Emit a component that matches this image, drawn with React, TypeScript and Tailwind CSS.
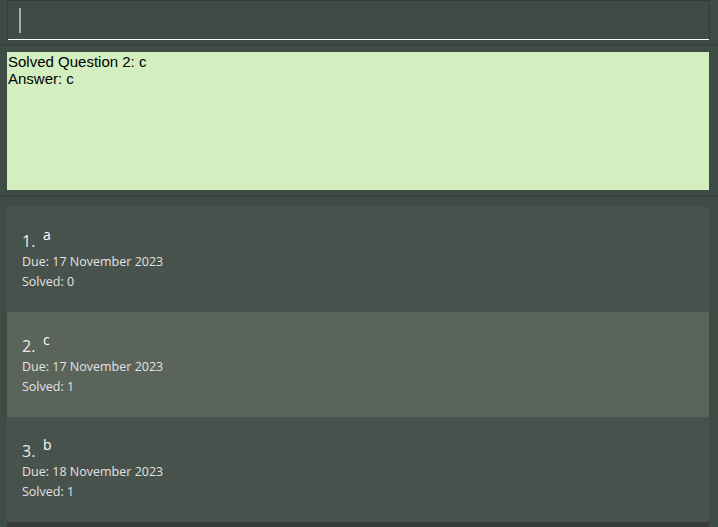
import React from 'react'

type Question = {
  index: number
  title: string
  due: string
  solved: number
  selected?: boolean
}

const questions: Question[] = [
  { index: 1, title: 'a', due: '17 November 2023', solved: 0 },
  { index: 2, title: 'c', due: '17 November 2023', solved: 1, selected: true },
  { index: 3, title: 'b', due: '18 November 2023', solved: 1 },
]

const QuestionCard = ({ q }: { q: Question }) => {
  return (
    <div
      className={
        'h-[105px] pl-[15px] pt-[19px] ' +
        (q.selected ? 'bg-[#5a645b]' : 'bg-[#48524c]')
      }
    >
      <div className="flex items-start h-[26px]">
        <span className="text-[16px] leading-[22px] text-[#ececec] pt-[4px] w-[21px]">{q.index}.</span>
        <span className="text-[14px] leading-[18px] text-white">{q.title}</span>
      </div>
      <p className="text-[12.5px] leading-[20px] text-[#e2e2e2]">Due: {q.due}</p>
      <p className="text-[12.5px] leading-[20px] text-[#e2e2e2]">Solved: {q.solved}</p>
    </div>
  )
}

export default function App() {
  return (
    <div
      className="w-[718px] h-[527px] bg-[#3f4c45] overflow-hidden flex flex-col"
      style={{ fontFamily: '"Open Sans", "Noto Sans", sans-serif' }}
    >
      {/* command box */}
      <div className="h-[44px] pl-[7px] pr-[8px]">
        <div className="h-[40px] border border-[#353b37] border-b-0 relative">
          <div className="absolute left-[11px] top-[7px] w-[2px] h-[25px] bg-[#a9aeab]" />
          <div className="absolute left-0 right-0 bottom-0 h-[1px] bg-white" />
        </div>
      </div>
      <div className="h-[2px] bg-[#38443d]" />

      {/* result box */}
      <div className="h-[149px] pl-[7px] pr-[9px] pt-[6px]">
        <div
          className="h-[138px] bg-[#d3efc0] pl-[1px] pt-[1px] text-[15px] leading-[17px] text-black"
          style={{ fontFamily: '"Liberation Sans", Arial, sans-serif' }}
        >
          <p>Solved Question 2: c</p>
          <p>Answer: c</p>
        </div>
      </div>
      <div className="h-[2px] bg-[#38443d]" />

      {/* question list */}
      <div className="flex-1 pl-[7px] pr-[9px] pt-[10px]">
        <div className="flex flex-col h-full">
          {questions.map((q) => (
            <QuestionCard key={q.index} q={q} />
          ))}
          <div className="flex-1 bg-[#383a39]" />
        </div>
      </div>
    </div>
  )
}
